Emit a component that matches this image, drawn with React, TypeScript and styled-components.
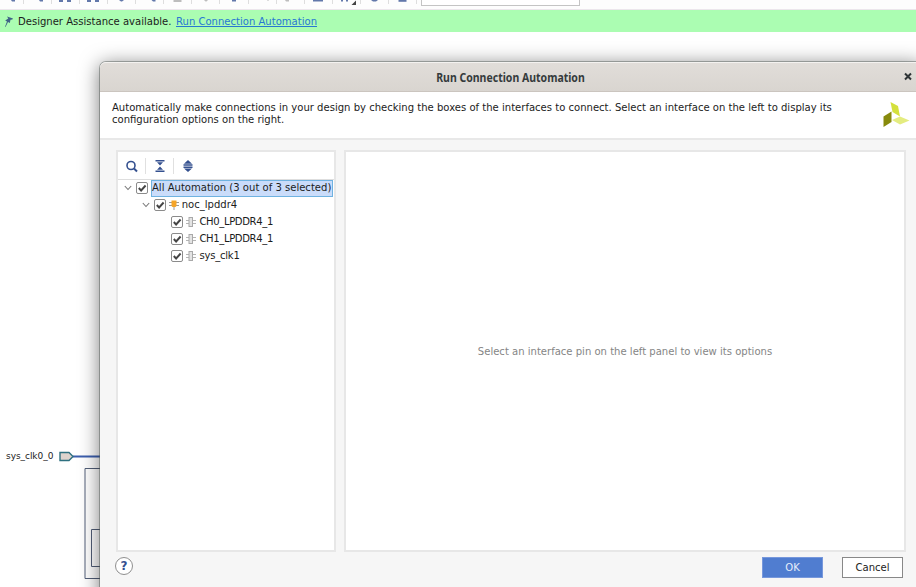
import React from "react";
import styled, { createGlobalStyle } from "styled-components";

const Global = createGlobalStyle`
  * { box-sizing: border-box; }
  body { margin: 0; background: #fff; overflow: hidden; }
`;

const Page = styled.div`
  position: relative;
  width: 916px;
  height: 587px;
  overflow: hidden;
  display: flex;
  flex-direction: column;
  background: #fff;
  color: #1c1c1c;
  font: 10.06px/12px "DejaVu Sans", sans-serif;
`;

const Toolbar = styled.div`
  display: flex;
  height: 10px;
  flex: none;
  align-items: flex-start;
  background: #fdfdfd;
  border-bottom: 1px solid #ece6ec;
`;

const ToolCell = styled.div<{ $first?: boolean }>`
  width: ${(p) => (p.$first ? 24 : 28.07)}px;
  height: 4px;
  border-right: 1px solid #dedede;
  svg { display: block; }
`;

const SearchField = styled.div`
  width: 159px;
  height: 6px;
  margin-left: 4px;
  border: 1px solid #c4c4c4;
  border-top: 0;
  background: #fff;
`;

const Banner = styled.div`
  display: flex;
  align-items: center;
  height: 22px;
  flex: none;
  padding: 1px 0 0 4px;
  background: #abfdb2;
`;

const BannerText = styled.span`
  width: 158px;
  margin-left: 4px;
  padding-top: 1px;
  white-space: pre;
`;

const BannerLink = styled.span`
  padding-top: 1px;
  color: #2878d2;
  text-decoration: underline;
  white-space: pre;
`;

const Canvas = styled.div`
  position: relative;
  flex: 1;
`;

const Diagram = styled.svg`
  position: absolute;
  left: 0;
  top: 408px;
`;

const PortLabel = styled.span`
  position: absolute;
  left: 6px;
  top: 418px;
  font-size: 9px;
  letter-spacing: -0.05px;
`;

const Dialog = styled.div`
  position: absolute;
  left: 100px;
  top: 62px;
  width: 822px;
  height: 560px;
  display: flex;
  flex-direction: column;
  background: #f6f6f6;
  border-radius: 6px 6px 0 0;
  box-shadow: 0 0 0 1px rgba(80, 88, 84, 0.45), 0 3px 19px 1px rgba(0, 0, 0, 0.5);
`;

const TitleBar = styled.div`
  display: flex;
  align-items: center;
  height: 30px;
  flex: none;
  padding: 0 9px 0 18px;
  border-top: 1px solid #f4f2f0;
  border-bottom: 1px solid #cbc5bf;
  border-radius: 6px 6px 0 0;
  background: linear-gradient(#e1ddd9, #d9d5d0);
`;

const Title = styled.div`
  flex: 1;
  text-align: center;
  color: #353b3c;
  font: bold 11.8px/16px "Noto Sans", sans-serif;
  transform: scaleX(0.89);
`;

const Header = styled.div`
  display: flex;
  justify-content: space-between;
  height: 48px;
  flex: none;
  padding: 10px 12px 0 12px;
  background: #fff;
  border-bottom: 2px solid #e8e8e8;
`;

const Description = styled.div`
  white-space: pre;
`;

const Panels = styled.div`
  display: grid;
  grid-template-columns: 220px 562px;
  column-gap: 8px;
  height: 402px;
  flex: none;
  margin: 10px 0 0 16px;
`;

const Panel = styled.div`
  border: 2px solid #e7e7e7;
  background: #fff;
`;

const EmptyPanel = styled(Panel)`
  display: flex;
  align-items: center;
  justify-content: center;
  padding-top: 2px;
  color: #858585;
`;

const PanelTools = styled.div`
  display: flex;
  align-items: center;
  height: 28px;
  border-bottom: 1px solid #dedede;
`;

const PanelTool = styled.div<{ $divided?: boolean }>`
  display: flex;
  align-items: center;
  justify-content: center;
  width: 28px;
  height: 16px;
  border-right: 1px solid ${(p) => (p.$divided ? "#e0e0e0" : "transparent")};
`;

const Tree = styled.div`
  margin-top: -1px;
`;

const TreeRow = styled.div<{ $depth: number }>`
  display: flex;
  align-items: center;
  height: 17px;
  padding-left: ${(p) => 6 + p.$depth * 17.7}px;
`;

const Twisty = styled.span`
  display: flex;
  flex: none;
  width: 12px;
  padding-top: 1px;
`;

const CheckBox = styled.span`
  display: flex;
  flex: none;
  width: 12px;
  height: 12px;
  border: 1px solid #8b8b8b;
  border-radius: 2px;
  background: #fff;
`;

const NodeIcon = styled.span`
  display: flex;
  width: 10px;
  margin-left: 3px;
`;

const NodeLabel = styled.span<{ $selected?: boolean; $spacing?: number }>`
  display: flex;
  flex: none;
  align-items: center;
  height: 17px;
  margin-left: 3px;
  letter-spacing: ${(p) => p.$spacing ?? 0}px;
  white-space: pre;
  ${(p) =>
    p.$selected &&
    `position: relative; top: 1px; width: 182px; padding-bottom: 1px; border: 1px solid #6fb2e0; background: #cadcfa;`}
`;

const Footer = styled.div`
  display: flex;
  align-items: flex-start;
  padding: 5px 0 0 15px;
`;

const HelpButton = styled.div`
  display: flex;
  align-items: center;
  justify-content: center;
  width: 18px;
  height: 18px;
  border: 1px solid #8f8f8f;
  border-radius: 50%;
  background: #fff;
  color: #34508f;
  font-weight: bold;
  font-size: 12px;
  margin-right: auto;
`;

const Button = styled.div<{ $primary?: boolean }>`
  display: flex;
  align-items: center;
  justify-content: center;
  width: 61px;
  height: 21px;
  margin-right: 19px;
  border: 1px solid ${(p) => (p.$primary ? "#7798dc" : "#888")};
  background: ${(p) => (p.$primary ? "#507dd0" : "#fff")};
  color: ${(p) => (p.$primary ? "#e6edfa" : "#222")};
`;

const Check = () => (
  <CheckBox>
    <svg width="10" height="10" viewBox="0 0 10 10">
      <path d="M1.8 5 4.1 7.5 8.6 2.5" fill="none" stroke="#454545" strokeWidth="1.9" />
    </svg>
  </CheckBox>
);

const Chevron = () => (
  <svg width="8" height="6" viewBox="0 0 8 6">
    <path d="M.8 1 4 4.5 7.2 1" fill="none" stroke="#777" strokeWidth="1.1" />
  </svg>
);

const BlockIcon = () => (
  <svg width="10" height="10" viewBox="0 0 10 10">
    <path d="M0 2.5H10M0 5.5H10M5 6V10" stroke="#999" />
    <path d="M2.5 .5H7.5V6L6.5 7H3.5L2.5 6Z" fill="#f5a52a" />
  </svg>
);

const PinIcon = () => (
  <svg width="10" height="10" viewBox="0 0 10 10">
    <path d="M0 3.5H10M0 6.5H10" stroke="#b5b5b5" />
    <rect x="3" y=".5" width="3.5" height="9" fill="#e4e4e4" stroke="#a9a9a9" />
  </svg>
);

const nodes = [
  { depth: 0, label: "All Automation (3 out of 3 selected)", open: true, selected: true },
  { depth: 1, label: "noc_lpddr4", open: true, icon: <BlockIcon /> },
  { depth: 2, label: "CH0_LPDDR4_1", spacing: -0.36, icon: <PinIcon /> },
  { depth: 2, label: "CH1_LPDDR4_1", spacing: -0.36, icon: <PinIcon /> },
  { depth: 2, label: "sys_clk1", spacing: -0.22, icon: <PinIcon /> },
];

const blue = "#6278aa";
const gray = "#bdbdbd";

const tools = [
  { d: "M11 0H15V1.5H12Z", fill: blue },
  { d: "M15 0H19V1.5H16Z", fill: blue },
  { d: "M7 0H11V2H7ZM15 0H19V2H15Z", fill: blue },
  { d: "M7 0H11V2H7ZM15 0H19V2H15Z", fill: blue },
  { d: "M11 0H16L14 1.5H13Z", fill: blue },
  { d: "M15.5 0H19.5V1.5H17Z", fill: blue },
  { d: "M9.5 0H17.5V2H9.5Z", fill: gray },
  { d: "M12 0H16L14.5 1.5H13.5Z", fill: gray },
  { d: "M12 0H16V1.5H12Z", fill: blue },
  { d: "M18 0H20V.6H18Z", fill: gray },
  { d: "M8 0H12V1.5H9Z", fill: gray },
  { d: "M8 0H18V1.5H8Z", fill: blue },
  { d: "M8 0H10V1.5H8ZM13 0H15V1.5H13Z", fill: blue, menu: true },
  { d: "M10 0H17L15 1.5H12Z", fill: blue },
  { d: "M9.5 0H17.5V1.8H9.5Z", fill: blue },
];

export default function App() {
  return (
    <>
      <Global />
      <Page>
        <Toolbar>
          {tools.map((t, i) => (
            <ToolCell key={i} $first={i === 0}>
              <svg width="23" height="5">
                <path d={t.d} fill={t.fill} />
                {t.menu && <path d="M23 .5V5H18.5Z" fill="#444" />}
              </svg>
            </ToolCell>
          ))}
          <SearchField />
        </Toolbar>
        <Banner>
          <svg width="10" height="13" viewBox="0 0 10 13">
            <path d="M3 1.5 9 3.5 8.3 4.6 6.5 4.8 5.8 8 4 7 1.5 12 1 11.7 3 6.5 1.2 5.5 4.3 3.6Z" fill="#3f6287" />
          </svg>
          <BannerText>Designer Assistance available.</BannerText>
          <BannerLink>Run Connection Automation</BannerLink>
        </Banner>
        <Canvas>
          <PortLabel>sys_clk0_0</PortLabel>
          <Diagram width="120" height="147" viewBox="0 440 120 147">
            <path d="M73 456.5H120" stroke="#3c5fae" strokeWidth="2" />
            <path d="M60 452.5H69L73 456.5 69 460.5H60Z" fill="#ddd3cd" stroke="#2e7080" strokeWidth="1.4" />
            <path d="M120 468.5H85V578.5H120M120 529.5H91.5V566.5H120" fill="none" stroke="#525f78" />
          </Diagram>
        </Canvas>
        <Dialog>
          <TitleBar>
            <Title>Run Connection Automation</Title>
            <svg width="10" height="10" viewBox="0 0 10 10">
              <path d="M2 1.5 8 7.5M8 1.5 2 7.5" stroke="#2e3436" strokeWidth="2" />
            </svg>
          </TitleBar>
          <Header>
            <Description>
              {"Automatically make connections in your design by checking the boxes of the interfaces to connect. Select an interface on the left to display its\nconfiguration options on the right."}
            </Description>
            <svg width="27" height="27" viewBox="0 0 27 27">
              <path d="M7.5 0 15 4 17 14.5 9.5 10Z" fill="#d4e03c" />
              <path d="M.5 14.5 8.5 9.5V20L.5 25Z" fill="#878a0c" />
              <path d="M9 18 17 14.5 26.5 18.5 17 22.5Z" fill="#e4ec80" />
            </svg>
          </Header>
          <Panels>
            <Panel>
              <PanelTools>
                <PanelTool $divided>
                  <svg width="14" height="14" viewBox="0 0 14 14" fill="none" stroke="#34508f">
                    <circle cx="6" cy="6.5" r="4" strokeWidth="1.6" />
                    <path d="M9 9.5 12 12.5" strokeWidth="2" />
                  </svg>
                </PanelTool>
                <PanelTool $divided>
                  <svg width="12" height="14" viewBox="0 0 12 14" fill="#34508f">
                    <path d="M1.5 1H10.5V2.5H1.5ZM3 3.3H9L6 6.4ZM1.5 13H10.5V11.5H1.5ZM3 10.7H9L6 7.6Z" />
                  </svg>
                </PanelTool>
                <PanelTool>
                  <svg width="12" height="14" viewBox="0 0 12 14" fill="#34508f">
                    <path d="M6 1 10 4.8H2ZM1.5 5.3H10.5V6.8H1.5ZM1.5 7.6H10.5V9H1.5ZM2 9.5H10L6 13Z" />
                  </svg>
                </PanelTool>
              </PanelTools>
              <Tree>
                {nodes.map((n) => (
                  <TreeRow key={n.label} $depth={n.depth}>
                    <Twisty>{n.open && <Chevron />}</Twisty>
                    <Check />
                    {n.icon && <NodeIcon>{n.icon}</NodeIcon>}
                    <NodeLabel $selected={n.selected} $spacing={n.spacing}>{n.label}</NodeLabel>
                  </TreeRow>
                ))}
              </Tree>
            </Panel>
            <EmptyPanel>Select an interface pin on the left panel to view its options</EmptyPanel>
          </Panels>
          <Footer>
            <HelpButton>?</HelpButton>
            <Button $primary>OK</Button>
            <Button>Cancel</Button>
          </Footer>
        </Dialog>
      </Page>
    </>
  );
}
